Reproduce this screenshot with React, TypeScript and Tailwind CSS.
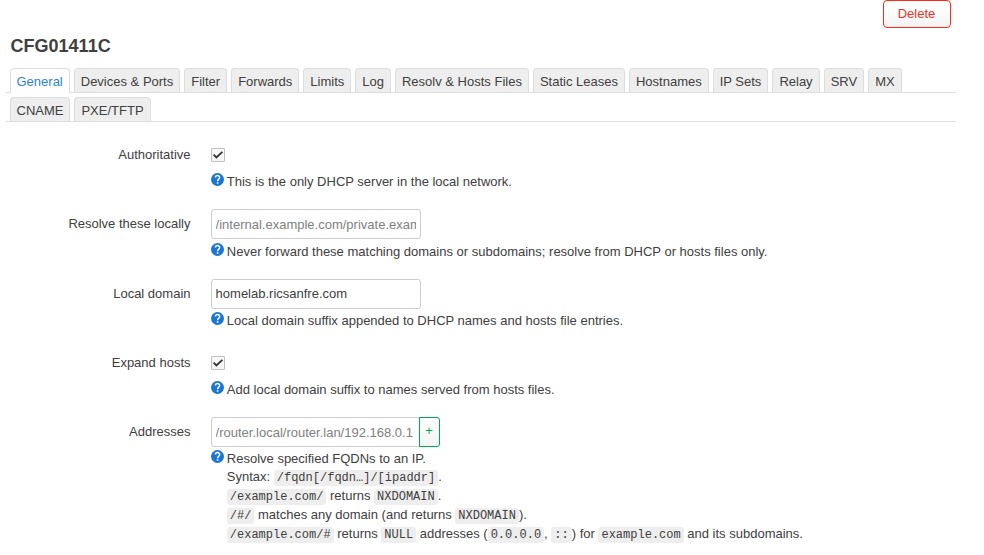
import type { ReactNode } from "react";

const primaryTabs = [
  "General", "Devices & Ports", "Filter", "Forwards", "Limits", "Log",
  "Resolv & Hosts Files", "Static Leases", "Hostnames", "IP Sets", "Relay", "SRV", "MX",
];
const secondaryTabs = ["CNAME", "PXE/TFTP"];

function Tab({ label, active = false }: { label: string; active?: boolean }) {
  return (
    <li
      className={
        active
          ? "-mb-px h-[25px] rounded-t-[4px] border border-b-0 border-[#dddddd] bg-white px-[6px] leading-[26px] text-[#2f7fd9]"
          : "h-6 rounded-t-[4px] border border-b-0 border-[#dddddd] bg-[#eeeeee] px-[6px] leading-[26px]"
      }
    >
      {label}
    </li>
  );
}

function TabRow({ tabs, active }: { tabs: string[]; active?: string }) {
  return (
    <ul className="flex h-[25px] gap-1 border-b border-[#dddddd] pl-[3.5px] whitespace-nowrap">
      {tabs.map((tab) => (
        <Tab key={tab} label={tab} active={tab === active} />
      ))}
    </ul>
  );
}

function HelpIcon() {
  return (
    <svg className="mr-[2.8px] h-[13px] w-[13px] shrink-0" viewBox="0 0 13 13" fill="none">
      <circle cx="6.5" cy="6.5" r="6.5" fill="#1976d2" />
      <path d="M4.4 4.6C4.4 1.9 8.7 2 8.7 4.5C8.7 6.1 6.6 6.2 6.6 8.2" stroke="white" strokeWidth="1.5" />
      <rect x="5.8" y="9.2" width="1.6" height="1.6" fill="white" />
    </svg>
  );
}

function Help({ children }: { children: ReactNode }) {
  return (
    <div className="flex">
      <HelpIcon />
      <div className="leading-[18px] whitespace-nowrap">{children}</div>
    </div>
  );
}

function Field({ label, className, children }: { label: string; className: string; children: ReactNode }) {
  return (
    <div className={`flex ${className}`}>
      <label className="mr-[20.5px] w-[184.5px] shrink-0 pt-[6px] text-right leading-[18px]">{label}</label>
      <div className="flex flex-col items-start">{children}</div>
    </div>
  );
}

function CheckedBox() {
  return (
    <span className="mt-[8px] mb-[11px] flex h-[14px] w-[14px] items-center justify-center rounded-[1px] border border-[#bfbfbf] bg-[#f7f7f7]">
      <svg className="h-3 w-3" viewBox="0 0 12 12" fill="none">
        <path d="M1.6 5.7L4.4 8.5L10.4 2.8" stroke="#333" strokeWidth="1.8" />
      </svg>
    </span>
  );
}

function Code({ children }: { children: ReactNode }) {
  return (
    <code className="rounded-[3px] bg-[#eeeeee] px-[3px] py-px font-['Liberation_Mono',monospace] text-[12px]">
      {children}
    </code>
  );
}

const inputStyle =
  "block h-[30px] w-[210px] rounded-[3px] border border-[#cccccc] bg-white pr-1 pl-[3.6px] text-[13px] leading-[18px] text-[#404040] outline-none placeholder:text-[#808080]";

export default function App() {
  return (
    <main className="h-[555px] w-[984px] overflow-hidden bg-white pl-[6px] font-['Liberation_Sans',Arial,sans-serif] text-[13px] leading-[18px] text-[#404040]">
      <div className="w-[950px]">
        <div className="flex justify-end pr-[5px]">
          <button className="h-7 w-[68px] rounded-[4px] border border-[#ff2a1a] bg-linear-to-b from-white via-white via-25% to-[#f3f3f3] pr-[1px] text-[13px] leading-[18px] text-[#ee3322]">
            Delete
          </button>
        </div>
        <h3 className="h-10 pl-[4.6px] text-[18px] leading-9 font-bold">CFG01411C</h3>
        <nav className="flex flex-col gap-1">
          <TabRow tabs={primaryTabs} active="General" />
          <TabRow tabs={secondaryTabs} />
        </nav>
        <form className="pt-[18px]">
          <Field label="Authoritative" className="h-[69px]">
            <CheckedBox />
            <Help>This is the only DHCP server in the local network.</Help>
          </Field>
          <Field label="Resolve these locally" className="h-[70px]">
            <input className={inputStyle} placeholder="/internal.example.com/private.exam" />
            <div className="pt-1"><Help>Never forward these matching domains or subdomains; resolve from DHCP or hosts files only.</Help></div>
          </Field>
          <Field label="Local domain" className="h-[69px]">
            <input className={`${inputStyle} pb-[2px]`} defaultValue="homelab.ricsanfre.com" />
            <div className="pt-[3px]"><Help>Local domain suffix appended to DHCP names and hosts file entries.</Help></div>
          </Field>
          <Field label="Expand hosts" className="h-[69px]">
            <CheckedBox />
            <Help>Add local domain suffix to names served from hosts files.</Help>
          </Field>
          <Field label="Addresses" className="h-[130px]">
            <div className="flex">
              <input className={inputStyle} placeholder="/router.local/router.lan/192.168.0.1" />
              <button className="-ml-[2px] h-[30px] w-[21px] rounded-r-[3px] border border-[#00a854] bg-linear-to-b from-white to-[#f3f3f3] pr-[1px] pb-[3px] text-[13px] text-[#00a854]">
                +
              </button>
            </div>
            <div className="pt-[3px]">
              <Help>
                <p>Resolve specified FQDNs to an IP.</p>
                <p className="h-[19px]">Syntax: <Code>/fqdn[/fqdn…]/[ipaddr]</Code>.</p>
                <p className="h-[19px]"><Code>/example.com/</Code> returns <Code>NXDOMAIN</Code>.</p>
                <p className="h-[19px]"><Code>/#/</Code> matches any domain (and returns <Code>NXDOMAIN</Code>).</p>
                <p className="h-[19px]">
                  <Code>/example.com/#</Code> returns <Code>NULL</Code> addresses (<Code>0.0.0.0</Code>, <Code>::</Code>) for <Code>example.com</Code> and its subdomains.
                </p>
              </Help>
            </div>
          </Field>
        </form>
      </div>
    </main>
  );
}
